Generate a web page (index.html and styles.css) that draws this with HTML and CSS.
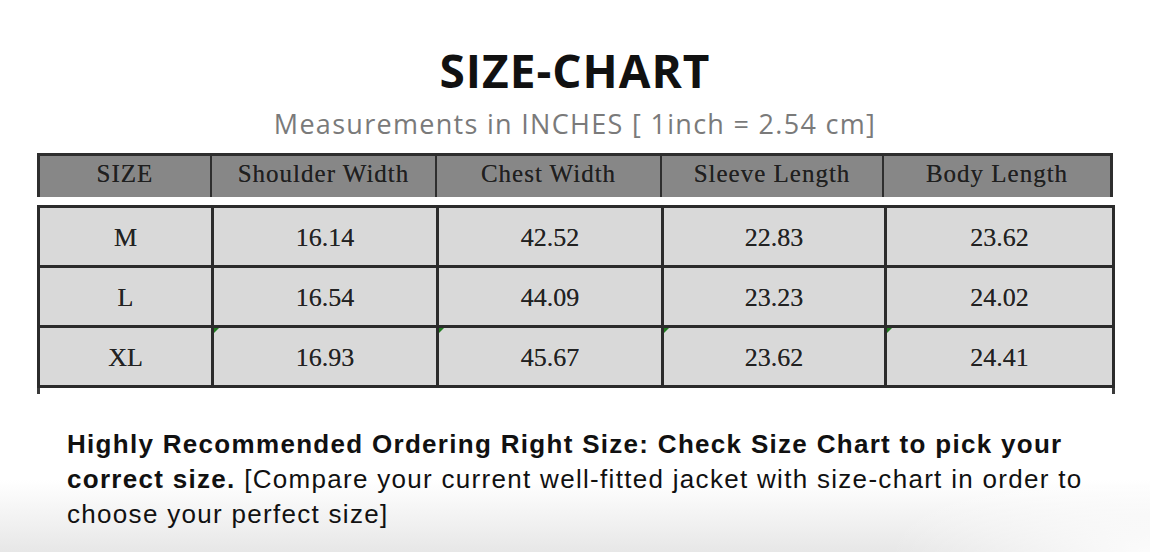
FILE: index.html
```html
<!DOCTYPE html>
<html lang="en">
<head>
<meta charset="utf-8">
<title>Size Chart</title>
<link rel="stylesheet" href="styles.css">
</head>
<body>
<div class="page">
  <h1 class="title">SIZE-CHART</h1>
  <p class="subtitle">Measurements in INCHES [ 1inch = 2.54 cm]</p>

  <div class="chart">
    <div class="head-grid">
      <div class="hcell">SIZE</div>
      <div class="hcell">Shoulder Width</div>
      <div class="hcell">Chest Width</div>
      <div class="hcell">Sleeve Length</div>
      <div class="hcell">Body Length</div>
    </div>

    <div class="body-grid">
      <div class="cell">M</div>
      <div class="cell">16.14</div>
      <div class="cell">42.52</div>
      <div class="cell">22.83</div>
      <div class="cell">23.62</div>

      <div class="cell">L</div>
      <div class="cell">16.54</div>
      <div class="cell">44.09</div>
      <div class="cell">23.23</div>
      <div class="cell">24.02</div>

      <div class="cell">XL</div>
      <div class="cell mark">16.93</div>
      <div class="cell mark">45.67</div>
      <div class="cell mark">23.62</div>
      <div class="cell mark">24.41</div>
    </div>
    <div class="tail"></div>
  </div>

  <p class="note"><strong>Highly Recommended Ordering Right Size: Check Size Chart to pick your correct size.</strong> [Compare your current well-fitted jacket with size-chart in order to choose your perfect size]</p>
</div>
</body>
</html>
```

FILE: styles.css
```css
html, body {
  margin: 0;
  padding: 0;
}

body {
  background: #ffffff;
}

.page {
  width: 1150px;
  height: 552px;
  overflow: hidden;
  display: flex;
  flex-direction: column;
  background:
    radial-gradient(ellipse 260px 90px at 100% 100%, rgba(255,255,255,0.85), rgba(255,255,255,0) 100%),
    linear-gradient(to bottom, #ffffff 0px, #ffffff 480px, #e7e7e7 552px);
}

.title {
  margin: 47px 0 0 0;
  font-family: "Open Sans", "Liberation Sans", sans-serif;
  font-weight: 700;
  font-size: 46px;
  line-height: 46px;
  letter-spacing: 1px;
  color: #111111;
  text-align: center;
}

.subtitle {
  margin: 17px 0 0 0;
  font-family: "Open Sans", "Liberation Sans", sans-serif;
  font-weight: 400;
  font-size: 27px;
  line-height: 27px;
  letter-spacing: 1.3px;
  color: #7a7a7a;
  text-align: center;
}

.chart {
  margin: 16px 0 0 37px;
  display: flex;
  flex-direction: column;
  width: 1078px;
}

.head-grid {
  width: 1070px;
  display: grid;
  grid-template-columns: 170px 223px 223px 220px 226px;
  column-gap: 2px;
  background: #2e2e2e;
  border: 3px solid #2e2e2e;
  border-bottom: 0;
}

.hcell {
  height: 41px;
  background: #878787;
  display: flex;
  align-items: center;
  justify-content: center;
  font-family: "Liberation Serif", "Times New Roman", serif;
  font-size: 25px;
  letter-spacing: 1px;
  color: #1f1f1f;
  padding-bottom: 5px;
  box-sizing: border-box;
  text-shadow: 0 0 0.6px rgba(20,20,20,0.6);
}

.body-grid {
  margin-top: 8px;
  width: 1072px;
  display: grid;
  grid-template-columns: 171px 222px 222px 220px 225px;
  grid-auto-rows: 57px;
  gap: 3px;
  background: #2b2b2b;
  border: 3px solid #2b2b2b;
}

.cell {
  position: relative;
  background: #d9d9d9;
  display: flex;
  align-items: center;
  justify-content: center;
  font-family: "Liberation Serif", "Times New Roman", serif;
  font-size: 26px;
  color: #222222;
  padding-top: 2px;
  box-sizing: border-box;
  text-shadow: 0 0 0.6px rgba(20,20,20,0.6);
}

.mark::before {
  content: "";
  position: absolute;
  left: 0;
  top: 0;
  width: 0;
  height: 0;
  border-top: 5px solid #1f7a1f;
  border-right: 5px solid transparent;
}

.tail {
  width: 1072px;
  height: 6px;
  border-left: 3px solid #3a3a3a;
  border-right: 3px solid #3a3a3a;
}

.note {
  margin: 33px 0 0 67px;
  width: 1040px;
  font-family: "Liberation Sans", Arial, sans-serif;
  font-size: 26px;
  line-height: 35px;
  letter-spacing: 1.3px;
  color: #111111;
}

.note strong {
  font-weight: 700;
}
```
